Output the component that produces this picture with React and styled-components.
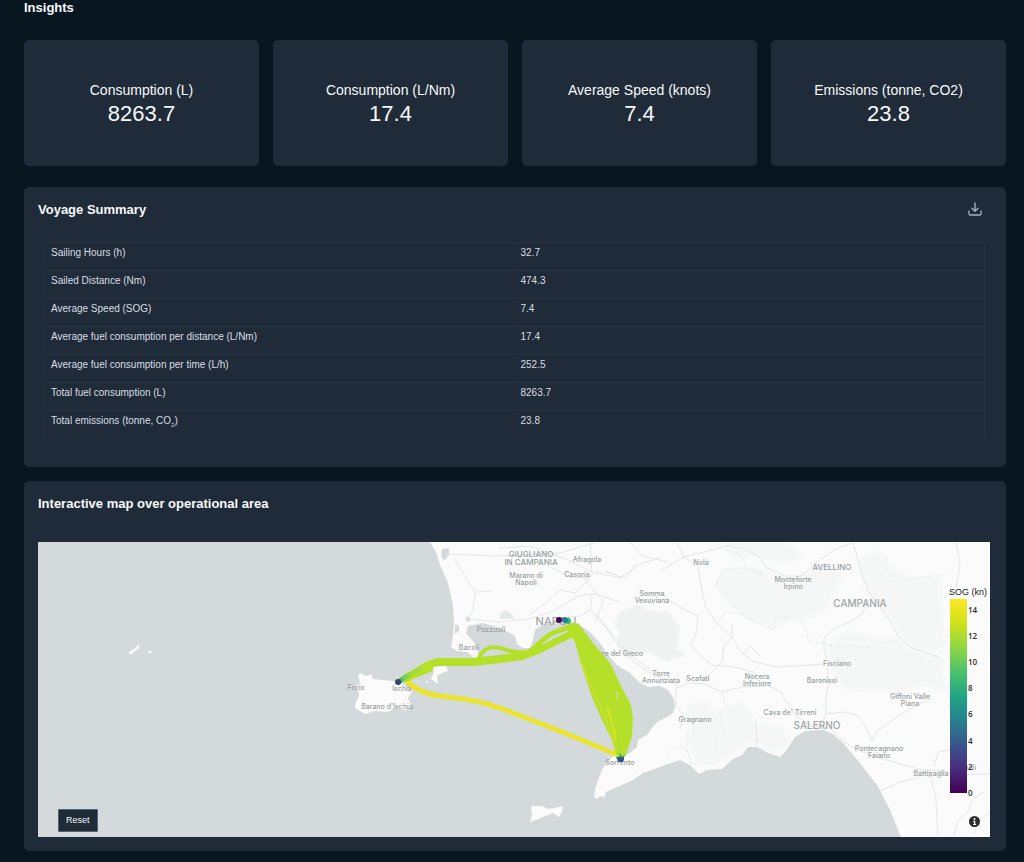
import React, { useState } from 'react';
import styled, { createGlobalStyle } from 'styled-components';

const GlobalStyle = createGlobalStyle`
  * {
    box-sizing: border-box;
  }
  body {
    margin: 0;
    background: #081620;
    color: #f7f9fa;
    font-family: 'Liberation Sans', Arial, sans-serif;
  }
`;

const Page = styled.main`
  padding: 0 18px 11px 24px;
`;

const PageTitle = styled.h1`
  margin: 0 0 25px;
  font-size: 13px;
  line-height: 15px;
  font-weight: 700;
`;

const StatGrid = styled.section`
  display: grid;
  grid-template-columns: repeat(4, 1fr);
  gap: 14px;
  margin-bottom: 21px;
`;

const StatCard = styled.div`
  display: flex;
  flex-direction: column;
  align-items: center;
  padding: 41px 8px;
  background: #1f2b39;
  border-radius: 5px;
`;

const StatLabel = styled.span`
  font-size: 14px;
  line-height: 18px;
`;

const StatValue = styled.span`
  font-size: 22px;
  line-height: 30px;
  height: 26px;
`;

const Panel = styled.section`
  background: #1f2b39;
  border-radius: 5px;
  padding: 14px 16px 14px 14px;
  margin-bottom: 14px;

  &:last-child {
    margin-bottom: 0;
  }
`;

const PanelHeader = styled.header`
  display: flex;
  align-items: flex-start;
  justify-content: space-between;
  height: 41px;
  padding-right: 7px;
`;

const PanelTitle = styled.h2`
  margin: 0;
  font-size: 13px;
  line-height: 17px;
  font-weight: 700;
`;

const IconButton = styled.button`
  display: flex;
  padding: 0;
  border: none;
  background: none;
  color: #a9b2bb;
  cursor: pointer;

  &:hover {
    color: #fff;
  }
`;

const TableWrap = styled.div`
  padding: 0 5px 14px 7px;
`;

const Table = styled.table`
  width: 100%;
  table-layout: fixed;
  border-collapse: collapse;
  border-left: 1px solid #222f3d;
  border-right: 1px solid #233140;
`;

const Cell = styled.td`
  height: 28px;
  padding: 4px 5px;
  border-top: 1px solid #263341;
  border-left: 1px solid #222f3d;
  color: #d8dee3;
  font-size: 10px;
  line-height: 12px;
  vertical-align: top;
  text-align: left;
  font-weight: 400;

  sub {
    font-size: 6px;
    line-height: 0;
  }
`;

const MapBox = styled.div`
  position: relative;
  height: 295px;
  margin-top: 6px;
  background: #d4dadc;
  overflow: hidden;
`;

const MapSvg = styled.svg`
  display: block;
  width: 100%;
  height: 100%;
`;

const MapLabel = styled.text`
  font-family: Inter, sans-serif;
  font-size: ${({ $size }) => $size || 7}px;
  font-weight: 500;
  fill: ${({ $size }) => ($size > 8 ? '#a0a6a8' : '#999ea1')};
  text-anchor: middle;
`;

const ScaleText = styled.text`
  font-family: 'Open Sans', sans-serif;
  font-size: 8px;
  font-weight: 600;
  fill: #2b2b2b;
`;

const ScaleTitle = styled.text`
  font-family: 'Liberation Sans', Arial, sans-serif;
  font-size: 9px;
  fill: #1c1c1c;
`;

const ResetButton = styled.button`
  position: absolute;
  left: 20px;
  bottom: 5px;
  height: 23px;
  padding: 0 7px;
  background: #1f2b39;
  color: #f7f9fa;
  border: 1px solid #55616e;
  border-radius: 1px;
  font-family: inherit;
  font-size: 9px;
  cursor: pointer;
`;

const InfoButton = styled(IconButton)`
  position: absolute;
  right: 10px;
  bottom: 10px;
`;

const stats = [
  { label: 'Consumption (L)', value: '8263.7' },
  { label: 'Consumption (L/Nm)', value: '17.4' },
  { label: 'Average Speed (knots)', value: '7.4' },
  { label: 'Emissions (tonne, CO2)', value: '23.8' },
];

const summary = [
  ['Sailing Hours (h)', '32.7'],
  ['Sailed Distance (Nm)', '474.3'],
  ['Average Speed (SOG)', '7.4'],
  ['Average fuel consumption per distance (L/Nm)', '17.4'],
  ['Average fuel consumption per time (L/h)', '252.5'],
  ['Total fuel consumption (L)', '8263.7'],
  [<>Total emissions (tonne, CO<sub>2</sub>)</>, '23.8'],
];

// [text, x, y, size]
const places = [
  ['GIUGLIANO', 531, 557, 8],
  ['IN CAMPANIA', 531, 565, 8],
  ['Afragola', 587, 562],
  ['Marano di', 526, 578],
  ['Napoli', 526, 585],
  ['Casoria', 577, 577],
  ['Somma', 652, 596],
  ['Vesuviana', 652, 603],
  ['Nola', 701, 565],
  ['AVELLINO', 832, 570, 8],
  ['Monteforte', 793, 582],
  ['Irpino', 793, 589],
  ['CAMPANIA', 860, 607, 10],
  ['NAPOLI', 556, 625, 11],
  ['Pozzuoli', 491, 632],
  ['Bacoli', 469, 650],
  ['Torre del Greco', 617, 656],
  ['Torre', 661, 676],
  ['Annunziata', 661, 683],
  ['Scafati', 698, 681],
  ['Nocera', 757, 679],
  ['Inferiore', 757, 686],
  ['Fisciano', 837, 666],
  ['Baronissi', 822, 683],
  ['Giffoni Valle', 910, 699],
  ['Piana', 910, 706],
  ['Gragnano', 695, 722],
  ["Cava de' Tirreni", 790, 715],
  ['SALERNO', 817, 729, 10],
  ['Pontecagnano', 879, 751],
  ['Faiano', 879, 758],
  ['Battipaglia', 931, 776],
  ['Eboli', 968, 770],
  ['Forio', 356, 690],
  ['Ischia', 402, 691],
  ["Barano d'Ischia", 387, 709],
  ['Sorrento', 620, 765],
];

const roads = [
  'M660 571L684 557L708 551L726 546L742 548L758 556L767 568L785 576L802 576L816 562L834 550L852 543',
  'M676 542L684 557L698 566L702 590L706 608L716 622L732 637L742 653L752 661L776 667L795 666L822 664',
  'M853 542L857 556L862 574L868 591L878 604L890 621L898 636L912 648L930 654L940 657',
  'M868 600L862 614L850 622L836 627L824 638L824 650L828 664L828 684L826 700L826 715L818 730',
  'M660 593L678 606L698 616L696 634L691 645L703 658L712 665L734 667L754 672L758 680',
  'M676 688L688 683L704 684L722 692L742 687L768 686L780 691L787 702L796 716L812 726L830 728L844 742L858 750L880 758L900 764L922 770L942 771L960 775L990 774',
  'M700 684L712 672L722 662L724 646L732 637M742 655L750 646L760 656M732 637L732 624',
  'M826 714L844 712L858 716L866 728L872 742L876 732L890 722L908 710L926 701',
  'M934 767L938 752L950 750M880 791L900 782L918 778L930 770L936 800L938 836',
  'M446 554L500 556L560 553L594 543M454 558L462 572L475 592L473 610L468 619L500 622L530 619L555 610L578 596L595 594L620 602M475 592L492 591',
  'M498 548L530 546L566 559L590 571L620 578L640 564L660 558',
  'M530 614L546 603L560 590L576 593L592 575L590 542M592 597L590 610L580 616L560 618',
  'M590 610L604 625L616 642L632 660L648 672L668 680L678 686M596 614L612 634L630 655L652 671',
  'M582 575L603 602L596 620M605 571L626 579L635 565M550 567L570 577L590 578M630 542L642 556L668 562',
  'M676 689L676 706L684 716L680 728M756 720L757 747',
  'M954 836L958 820L968 812L972 800L984 792M974 834L978 822L990 812M956 542L960 565L956 588',
];

const parks = [
  'M622 612L640 606L646 611L668 613L678 628L676 650L684 654L668 660L646 650L628 657L618 646L620 632L616 622Z',
  'M716 585L726 570L752 568L790 582L830 560L840 575L828 606L812 616L792 617L772 628L740 612L724 598Z',
  'M860 560L880 552L890 566L912 580L940 578L942 620L944 644L930 652L908 646L896 624L878 602L866 590Z',
  'M828 646L846 632L866 636L896 640L908 650L940 660L946 690L922 684L900 696L878 688L848 690L834 674Z',
  'M688 706L704 700L718 714L742 702L756 722L780 728L790 740L776 752L748 742L724 760L700 764L690 744Z',
  'M726 542L780 542L804 556L782 562L752 554L734 560Z',
];

const tickLabels = [14, 12, 10, 8, 6, 4, 2, 0];

const DownloadIcon = () => (
  <svg width="16" height="16" viewBox="0 0 24 24" fill="none" stroke="currentColor" strokeWidth="2" strokeLinecap="round" strokeLinejoin="round">
    <path d="M21 15v4a2 2 0 0 1-2 2H5a2 2 0 0 1-2-2v-4" />
    <path d="M12 3v12M7.500 11L12 15.500L16.500 11" />
  </svg>
);

const InfoIcon = () => (
  <svg width="11" height="11" viewBox="0 0 20 20">
    <circle cx="10" cy="10" r="10" fill="#292b2d" />
    <circle cx="10" cy="5.500" r="1.800" fill="#fff" />
    <path d="M7.500 8.500h4v6h1.500v1.800h-5.500v-1.800H9v-4.200H7.500z" fill="#fff" />
  </svg>
);

const VoyageMap = ({ zoomed }) => (
  <MapSvg
    viewBox={zoomed ? '340 590 320 200' : '38 542 952 295'}
    preserveAspectRatio="xMaxYMid slice"
    role="img"
    aria-label="Voyage tracks between Ischia, Napoli and Sorrento"
  >
    <defs>
      <linearGradient id="viridis" x1="0" y1="0" x2="0" y2="1">
        <stop offset="0" stopColor="#fde725" />
        <stop offset="0.12" stopColor="#d2e21b" />
        <stop offset="0.25" stopColor="#8fd744" />
        <stop offset="0.38" stopColor="#4ac16d" />
        <stop offset="0.5" stopColor="#21a585" />
        <stop offset="0.62" stopColor="#26828e" />
        <stop offset="0.74" stopColor="#38598c" />
        <stop offset="0.87" stopColor="#472f7d" />
        <stop offset="1" stopColor="#440154" />
      </linearGradient>
      <linearGradient id="arrival" gradientUnits="userSpaceOnUse" x1="396" y1="684" x2="416" y2="672">
        <stop offset="0.1" stopColor="#31688e" />
        <stop offset="0.35" stopColor="#5ec962" />
        <stop offset="0.8" stopColor="#a5db36" />
      </linearGradient>
    </defs>

    {/* land */}
    <g fill="#fafbfa">
      <path d="M430 542L436 552L440 565L448 583L453 605L454 623L453 637L451 647L457 651L468 652L473 657L475 659L478 656L477 647L472 640L466 633L468 626L483 623L497 627L508 632L515 636L517 644L523 648L530 648L533 640L535 630L542 625L555 622L577 623L590 632L600 643L608 655L617 665L630 673L640 683L648 687L660 686L668 690L674 699L675 707L673 713L667 717L657 722L652 728L647 735L638 740L637 747L630 753L622 758L615 755L610 759L603 768L598 780L595 790L594 797L597 799L601 796L604 798L606 792L617 787L633 780L643 773L663 766L680 760L690 765L699 774L707 770L722 769L733 759L742 755L748 747L758 747L768 753L780 757L785 752L795 737L805 731L823 730L833 734L843 743L860 763L877 785L890 810L901 837L990 837L990 542Z" />
      <path d="M360 673L366 676L371 674L373 679L393 681L402 683L407 688L413 690L408 698L412 707L405 710L394 708L388 712L375 711L365 714L355 708L355 704L359 696L358 689L354 688L360 682L358 676Z" />
      <path d="M436 665L446 666L448 671L442 673L437 676L438 684L434 681L431 679L434 672L432 668Z" />
      <path d="M531 806L542 806L548 809L555 808L563 806L562 812L559 817L553 813L543 817L536 820L530 822L532 814Z" />
      <path d="M139 644L139 648L134 652L130 655L129 652L134 649Z" />
      <circle cx="150" cy="652" r="1.500" />
      <circle cx="427" cy="682" r="1" />
    </g>
    <g fill="#f5f7f6" stroke="#f7f9f8" strokeWidth="4" strokeLinejoin="round">
      {parks.map((d) => (
        <path key={d} d={d} />
      ))}
    </g>
    <path d={parks[0]} fill="#eef2f0" stroke="#f1f4f2" strokeWidth="3" strokeLinejoin="round" />

    {/* lakes */}
    <g fill="#d4dadc">
      <path d="M442 549L449 548L449 555L444 561L441 556Z" />
      <path d="M455 624L459 626L459 631L455 634Z" />
      <circle cx="468" cy="619" r="2.500" />
      <path d="M500 613L506 610L512 614L514 619L500 619Z" opacity="0.5" />
    </g>

    <g fill="none" stroke="#e5e6e6" strokeWidth="1">
      {roads.map((d) => (
        <path key={d} d={d} strokeLinejoin="round" />
      ))}
    </g>
    <g fill="none" stroke="#e3e5e4" strokeWidth="1" strokeDasharray="1.500 1.500">
      <path d="M726 549L742 557L746 568L762 571M762 574L742 568L722 571L716 585L728 594M733 605L756 622L774 630L776 618L800 618L806 630L809 642L824 643L840 648L850 646L866 648L878 644L898 640" />
      <path d="M718 622L724 612L742 614L758 624M886 556L886 570L900 581L920 578L946 574M950 628L946 638M932 656L944 662" />
      <path d="M722 693L727 706L720 714L724 732L716 738L718 760M688 732L686 748L692 764L704 762L716 765M668 754L672 748L684 747L690 756" />
    </g>

    {places.map(([name, x, y, size]) => (
      <MapLabel key={name} x={x} y={y} $size={size}>
        {name}
      </MapLabel>
    ))}

    {/* tracks */}
    <path
      d="M406 680C413 688 425 694 440 696S475 699 500 708L560 731L618 755"
      fill="none"
      stroke="#e9e430"
      strokeWidth="5"
      strokeLinecap="round"
    />
    <g fill="none" stroke="#b5e02a" strokeLinecap="round" strokeLinejoin="round">
      <path d="M408 677C417 673 428 663 438 662L473 662L500 659L523 656" strokeWidth="8" />
      <path d="M405 679L430 669" strokeWidth="6" />
      <path d="M479 658C483 648 491 646 500 648S513 654 526 652" strokeWidth="4" />
      <path d="M522 656C536 650 543 637 553 633S565 629 574 625" strokeWidth="5" />
      <path d="M522 656C536 654 546 645 572 634" strokeWidth="7" />
    </g>
    <path d="M567 630L578 623L593 643L610 663L623 690L631 705L633 718L632 736L627 752L622 761L617 757L612 740L602 720L592 697L583 670L575 642Z" fill="#b5e02a" />
    <path d="M607 707C611 718 614 730 616 740" fill="none" stroke="#dde32a" strokeWidth="2" />
    <path d="M580 659L591 686L606 719L616 750" fill="none" stroke="#c8e22c" strokeWidth="2" />
    <path d="M616 692L618 695L617 699" fill="none" stroke="#d4dadc" strokeWidth="1" />
    <path d="M399 682C405 676 412 674 420 669" fill="none" stroke="url(#arrival)" strokeWidth="5" strokeLinecap="round" />
    <circle cx="398" cy="682" r="3" fill="#34456f" />
    <path d="M616 757L624 757L623 762L618 762Z" fill="#26828e" />
    <circle cx="621" cy="759" r="3" fill="#3b4c86" />
    <path d="M620 753L621 758L625 755" fill="none" stroke="#21a585" strokeWidth="1" />
    <circle cx="568" cy="621" r="3" fill="#35b779" />
    <circle cx="565" cy="620" r="3" fill="#26828e" />
    <circle cx="559" cy="620" r="3" fill="#440154" />

    {/* colour scale */}
    <ScaleTitle x="949" y="595">SOG (kn)</ScaleTitle>
    <rect x="950" y="599" width="17" height="194" fill="url(#viridis)" />
    {tickLabels.map((n, i) => (
      <ScaleText key={n} x="968" y={613 + Math.round(i * 26.1)}>
        {n}
      </ScaleText>
    ))}
  </MapSvg>
);

const App = () => {
  const [zoomed, setZoomed] = useState(false);

  return (
    <>
      <GlobalStyle />
      <Page>
        <PageTitle>Insights</PageTitle>

        <StatGrid>
          {stats.map((s) => (
            <StatCard key={s.label}>
              <StatLabel>{s.label}</StatLabel>
              <StatValue>{s.value}</StatValue>
            </StatCard>
          ))}
        </StatGrid>

        <Panel>
          <PanelHeader>
            <PanelTitle>Voyage Summary</PanelTitle>
            <IconButton type="button" aria-label="Download summary">
              <DownloadIcon />
            </IconButton>
          </PanelHeader>
          <TableWrap>
            <Table>
              <tbody>
                {summary.map(([label, value], i) => (
                  <tr key={i}>
                    <Cell as="th" scope="row">{label}</Cell>
                    <Cell>{value}</Cell>
                  </tr>
                ))}
              </tbody>
            </Table>
          </TableWrap>
        </Panel>

        <Panel>
          <PanelHeader>
            <PanelTitle>Interactive map over operational area</PanelTitle>
          </PanelHeader>
          <MapBox onDoubleClick={() => setZoomed(true)}>
            <VoyageMap zoomed={zoomed} />
            <ResetButton type="button" onClick={() => setZoomed(false)}>Reset</ResetButton>
            <InfoButton type="button" aria-label="Map information">
              <InfoIcon />
            </InfoButton>
          </MapBox>
        </Panel>
      </Page>
    </>
  );
};

export default App;
